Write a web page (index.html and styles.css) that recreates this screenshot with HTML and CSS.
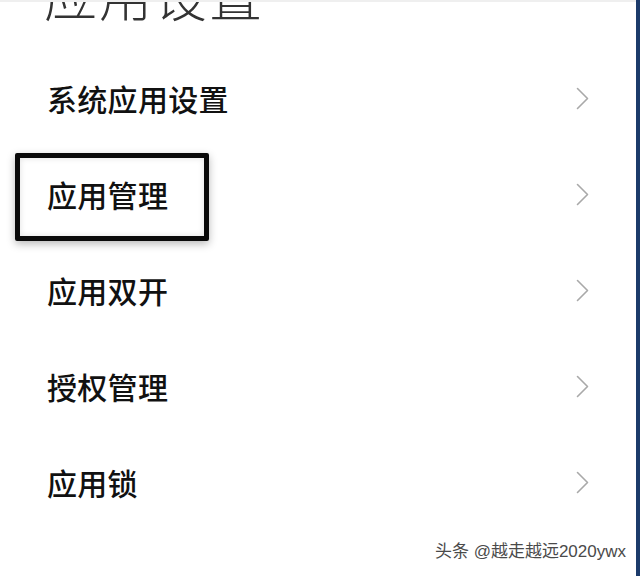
FILE: index.html
```html
<!DOCTYPE html>
<html lang="zh-CN">
<head>
<meta charset="utf-8">
<title>应用设置</title>
<link rel="stylesheet" href="styles.css">
</head>
<body>
<div class="screen">
  <div class="main">
    <div class="title">应用设置</div>
    <ul class="list">
      <li class="row"><span class="label">系统应用设置</span><svg class="chev" viewBox="0 0 13 23" width="13" height="23"><polyline points="1.5,1.5 11.5,11.5 1.5,21.5"/></svg></li>
      <li class="row highlighted"><span class="label">应用管理</span><svg class="chev" viewBox="0 0 13 23" width="13" height="23"><polyline points="1.5,1.5 11.5,11.5 1.5,21.5"/></svg><span class="mark"></span></li>
      <li class="row"><span class="label">应用双开</span><svg class="chev" viewBox="0 0 13 23" width="13" height="23"><polyline points="1.5,1.5 11.5,11.5 1.5,21.5"/></svg></li>
      <li class="row"><span class="label">授权管理</span><svg class="chev" viewBox="0 0 13 23" width="13" height="23"><polyline points="1.5,1.5 11.5,11.5 1.5,21.5"/></svg></li>
      <li class="row"><span class="label">应用锁</span><svg class="chev" viewBox="0 0 13 23" width="13" height="23"><polyline points="1.5,1.5 11.5,11.5 1.5,21.5"/></svg></li>
    </ul>
    <div class="watermark">头条 @越走越远2020ywx</div>
  </div>
  <div class="edge"></div>
</div>
</body>
</html>
```
FILE: styles.css
```css
html, body {
  margin: 0;
  padding: 0;
  background: #ffffff;
}
.screen {
  width: 640px;
  height: 576px;
  overflow: hidden;
  display: flex;
  font-family: "Noto Sans CJK SC", "Noto Sans", sans-serif;
}
.main {
  flex: 1;
  position: relative;
  border-top: 2px solid #efefef;
  box-sizing: border-box;
  overflow: hidden;
}
.edge {
  width: 4px;
  background: #1c3b6b;
}
.title {
  font-size: 53px;
  line-height: 53px;
  font-weight: 300;
  color: #333333;
  padding-left: 44px;
  margin-top: -34px;
  letter-spacing: 2px;
}
.list {
  list-style: none;
  margin: 29px 0 0 0;
  padding: 0;
}
.row {
  position: relative;
  height: 96px;
  display: flex;
  align-items: center;
  justify-content: space-between;
  padding: 0 47px 0 47px;
}
.label {
  font-size: 30px;
  line-height: 30px;
  font-weight: 500;
  color: #111111;
  letter-spacing: 0.3px;
}
.chev {
  fill: none;
  stroke: #a9a9a9;
  stroke-width: 1.6;
  stroke-linecap: round;
  stroke-linejoin: round;
}
.mark {
  position: absolute;
  left: 15px;
  top: 7px;
  width: 194px;
  height: 88px;
  box-sizing: border-box;
  border: 5px solid #0a0a0a;
  border-radius: 2px;
  box-shadow: 0 3px 8px rgba(0, 0, 0, 0.28), inset 0 0 6px rgba(0, 0, 0, 0.12);
  pointer-events: none;
}
.watermark {
  position: absolute;
  right: 10px;
  bottom: 14px;
  font-family: "Liberation Sans", "Noto Sans CJK SC", sans-serif;
  font-size: 17px;
  line-height: 20px;
  color: #4a4a4a;
  text-shadow: 1px 1px 0 #ffffff, -1px -1px 0 #ffffff, 1px -1px 0 #ffffff, -1px 1px 0 #ffffff, 0 0 2px #ffffff;
}
```
